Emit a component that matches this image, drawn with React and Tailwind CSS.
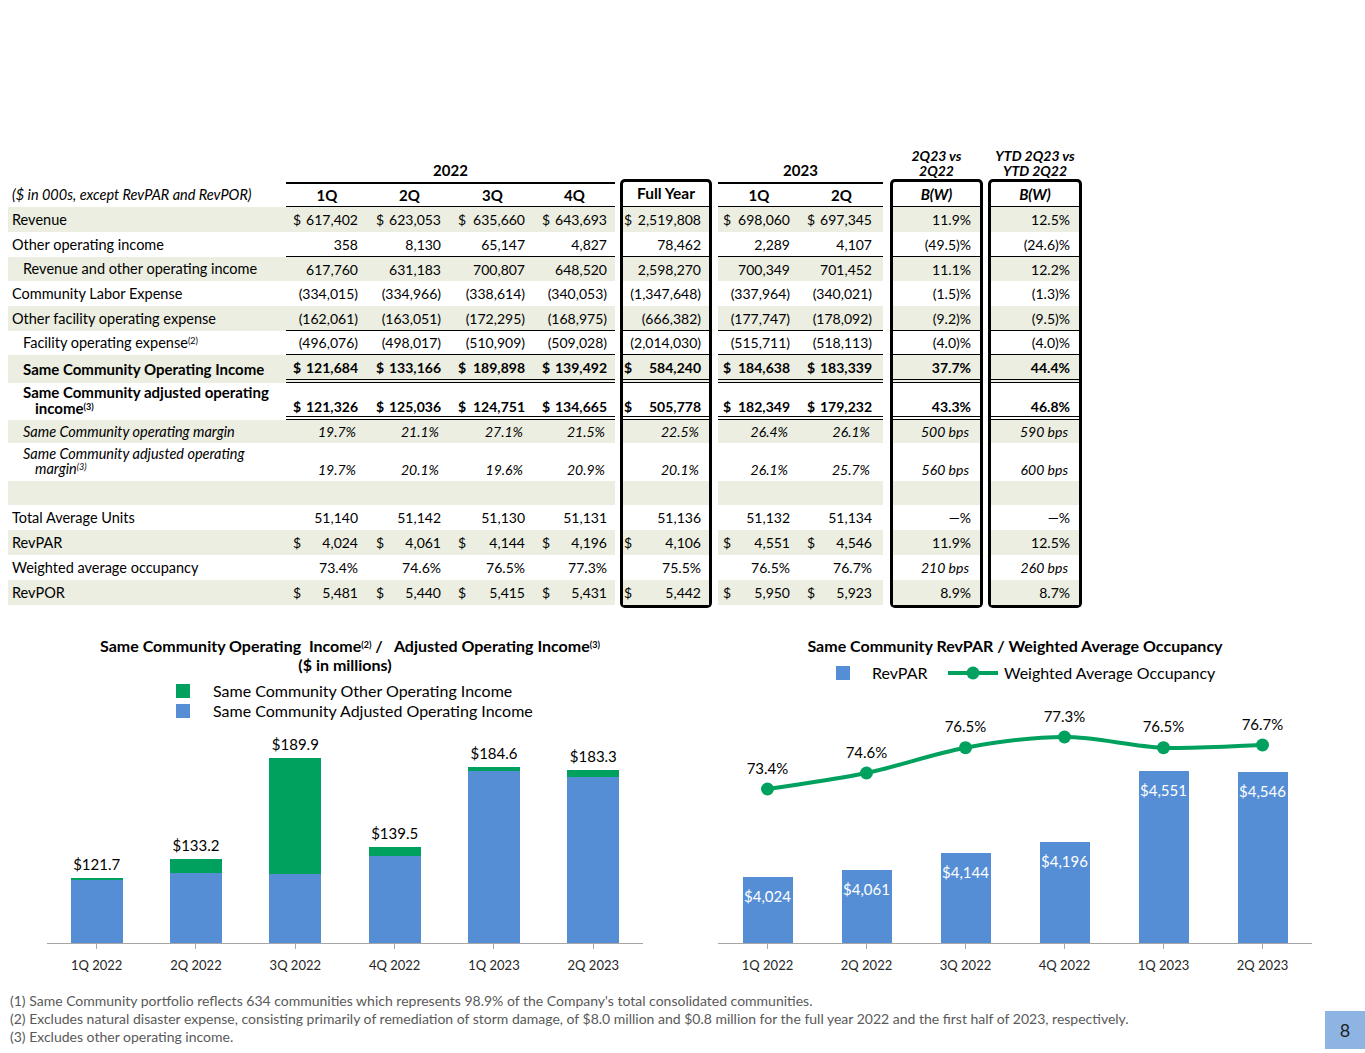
import React from 'react';

const SHADE = 'bg-[#EBEEE0]';

// column geometry for the numeric sections
const QCOLS = [
  { w: 'w-[82px]', pl: 'pl-[7px]', pr: 'pr-[10px]' },
  { w: 'w-[83px]', pl: 'pl-[8px]', pr: 'pr-[10px]' },
  { w: 'w-[83px]', pl: 'pl-[7px]', pr: 'pr-[9px]' },
  { w: 'w-[81px]', pl: 'pl-[8px]', pr: 'pr-[8px]' },
];
const FYCOL = { w: 'w-[86px]', pl: 'pl-[1px]', pr: 'pr-[8px]' };
const YCOLS = [
  { w: 'w-[82px]', pl: 'pl-[5px]', pr: 'pr-[10px]' },
  { w: 'w-[83px]', pl: 'pl-[7px]', pr: 'pr-[11px]' },
];
const B1COL = { w: 'w-[87px]', pl: 'pl-[2px]', pr: 'pr-[9px]', noDollar: true };
const B2COL = { w: 'w-[88px]', pl: 'pl-[2px]', pr: 'pr-[9px]', noDollar: true };

const rows = [
  { label: 'Revenue', h: 'h-[25px]', shade: true, d: true, q: ['617,402', '623,053', '635,660', '643,693'], fy: '2,519,808', y: ['698,060', '697,345'], b: ['11.9%', '12.5%'] },
  { label: 'Other operating income', h: 'h-[25px]', line: 'single', q: ['358', '8,130', '65,147', '4,827'], fy: '78,462', y: ['2,289', '4,107'], b: ['(49.5)%', '(24.6)%'] },
  { label: 'Revenue and other operating income', indent: true, h: 'h-[24px]', shade: true, q: ['617,760', '631,183', '700,807', '648,520'], fy: '2,598,270', y: ['700,349', '701,452'], b: ['11.1%', '12.2%'] },
  { label: 'Community Labor Expense', h: 'h-[25px]', q: ['(334,015)', '(334,966)', '(338,614)', '(340,053)'], fy: '(1,347,648)', y: ['(337,964)', '(340,021)'], b: ['(1.5)%', '(1.3)%'] },
  { label: 'Other facility operating expense', h: 'h-[25px]', shade: true, line: 'single', q: ['(162,061)', '(163,051)', '(172,295)', '(168,975)'], fy: '(666,382)', y: ['(177,747)', '(178,092)'], b: ['(9.2)%', '(9.5)%'] },
  { label: 'Facility operating expense', sup: '(2)', indent: true, h: 'h-[24px]', line: 'single', q: ['(496,076)', '(498,017)', '(510,909)', '(509,028)'], fy: '(2,014,030)', y: ['(515,711)', '(518,113)'], b: ['(4.0)%', '(4.0)%'] },
  { label: 'Same Community Operating Income', kind: 'bold', indent: true, h: 'h-[28px]', shade: true, d: true, line: 'double', q: ['121,684', '133,166', '189,898', '139,492'], fy: '584,240', y: ['184,638', '183,339'], b: ['37.7%', '44.4%'] },
  { label: 'Same Community adjusted operating', label2: 'income', sup: '(3)', kind: 'bold', indent: true, tall: true, h: 'h-[37px]', labelPb: 'pb-[4px] leading-[16px]', valPb: 'pb-[1px]', d: true, line: 'double', q: ['121,326', '125,036', '124,751', '134,665'], fy: '505,778', y: ['182,349', '179,232'], b: ['43.3%', '46.8%'] },
  { label: 'Same Community operating margin', kind: 'italic', indent: true, h: 'h-[23px]', shade: true, q: ['19.7%', '21.1%', '27.1%', '21.5%'], fy: '22.5%', y: ['26.4%', '26.1%'], b: ['500 bps', '590 bps'] },
  { label: 'Same Community adjusted operating', label2: 'margin', sup: '(3)', kind: 'italic', indent: true, tall: true, h: 'h-[38px]', labelPb: 'pb-[5px] leading-[15px]', valPb: 'pb-[3px]', q: ['19.7%', '20.1%', '19.6%', '20.9%'], fy: '20.1%', y: ['26.1%', '25.7%'], b: ['560 bps', '600 bps'] },
  { empty: true, h: 'h-[24px]', shade: true },
  { label: 'Total Average Units', h: 'h-[25px]', q: ['51,140', '51,142', '51,130', '51,131'], fy: '51,136', y: ['51,132', '51,134'], b: ['—%', '—%'] },
  { label: 'RevPAR', h: 'h-[25px]', shade: true, d: true, q: ['4,024', '4,061', '4,144', '4,196'], fy: '4,106', y: ['4,551', '4,546'], b: ['11.9%', '12.5%'] },
  { label: 'Weighted average occupancy', h: 'h-[25px]', q: ['73.4%', '74.6%', '76.5%', '77.3%'], fy: '75.5%', y: ['76.5%', '76.7%'], b: ['210 bps', '260 bps'] },
  { label: 'RevPOR', h: 'h-[25px]', shade: true, d: true, q: ['5,481', '5,440', '5,415', '5,431'], fy: '5,442', y: ['5,950', '5,923'], b: ['8.9%', '8.7%'] },
];

const LabelCell = ({ r }) => {
  const weight = r.kind === 'bold' ? 'font-bold text-[15px]' : r.kind === 'italic' ? 'italic' : '';
  return (
    <div
      className={`${r.h} flex ${r.tall ? `flex-col justify-end ${r.labelPb}` : 'items-center'} ${r.shade ? SHADE : ''} ${r.indent ? 'pl-[15px]' : 'pl-[4px]'} ${weight}`}
    >
      {r.tall ? (
        <>
          <span>{r.label}</span>
          <span className="pl-[12px]">
            {r.label2}
            <sup className="text-[9px] -top-[4px]">{r.sup}</sup>
          </span>
        </>
      ) : (
        <span>
          {r.label}
          {r.sup && <sup className="text-[9px]">{r.sup}</sup>}
        </span>
      )}
    </div>
  );
};

const NumCell = ({ r, v, col }) => {
  const border =
    r.line === 'single' ? 'border-b border-black' : r.line === 'double' ? 'border-b-4 border-double border-black' : '';
  const align = r.tall ? `items-end leading-[16px] ${r.valPb}` : 'items-center';
  const ital = r.kind === 'italic' || (v && v.includes('bps')) ? 'italic' : '';
  return (
    <div
      className={`${r.h} ${col.w} ${col.pl} ${col.pr} flex ${align} justify-between text-[14px] ${r.shade ? SHADE : ''} ${border} ${r.kind === 'bold' ? 'font-bold text-[14.5px]' : ''} ${ital}`}
    >
      <span>{r.d && !col.noDollar ? '$' : ''}</span>
      <span className={ital ? 'pr-[2px]' : ''}>{v}</span>
    </div>
  );
};

const BoxSection = ({ ml, col, head, pick }) => (
  <div className={`${ml} ${col.w} flex flex-col ring-[3px] ring-black rounded-[2px]`}>
    <div className="h-[25px] border-b border-black flex items-center justify-center font-bold italic text-[15px]">{head}</div>
    {rows.map((r, i) => (
      <NumCell key={i} r={r} v={pick(r)} col={col} />
    ))}
  </div>
);

const FinancialTable = () => (
  <div className="pl-[8px] text-[14.5px] text-black">
    {/* year headers */}
    <div className="h-[37px] flex items-end pb-[4px] font-bold text-[14px] leading-[15px]">
      <div className="w-[278px]" />
      <div className="w-[329px] text-center text-[15px]">2022</div>
      <div className="ml-[8px] w-[86px]" />
      <div className="ml-[9px] w-[165px] text-center text-[15px]">2023</div>
      <div className="ml-[10px] w-[87px] text-center italic">
        2Q23 vs
        <br />
        2Q22
      </div>
      <div className="ml-[11px] w-[88px] text-center italic whitespace-nowrap">
        YTD 2Q23 vs
        <br />
        YTD 2Q22
      </div>
    </div>

    <div className="flex">
      {/* labels */}
      <div className="w-[278px] flex flex-col">
        <div className="h-[25px] flex items-center pl-[4px] italic">($ in 000s, except RevPAR and RevPOR)</div>
        {rows.map((r, i) => (
          <LabelCell key={i} r={r} />
        ))}
      </div>

      {/* 2022 quarters */}
      <div className="flex flex-col">
        <div className="h-[25px] flex border-t-2 border-b border-black font-bold text-[15px]">
          {['1Q', '2Q', '3Q', '4Q'].map((h, i) => (
            <div key={h} className={`${QCOLS[i].w} flex items-center justify-center`}>
              {h}
            </div>
          ))}
        </div>
        {rows.map((r, i) => (
          <div key={i} className="flex">
            {QCOLS.map((c, j) => (
              <NumCell key={j} r={r} v={r.q?.[j]} col={c} />
            ))}
          </div>
        ))}
      </div>

      {/* full year box */}
      <div className="ml-[8px] w-[86px] flex flex-col ring-[3px] ring-black rounded-[2px]">
        <div className="h-[25px] border-b border-black flex items-center justify-center font-bold text-[15.5px]">Full Year</div>
        {rows.map((r, i) => (
          <NumCell key={i} r={r} v={r.fy} col={FYCOL} />
        ))}
      </div>

      {/* 2023 quarters */}
      <div className="ml-[9px] flex flex-col">
        <div className="h-[25px] flex border-t-2 border-b border-black font-bold text-[15px]">
          {['1Q', '2Q'].map((h, i) => (
            <div key={h} className={`${YCOLS[i].w} flex items-center justify-center`}>
              {h}
            </div>
          ))}
        </div>
        {rows.map((r, i) => (
          <div key={i} className="flex">
            {YCOLS.map((c, j) => (
              <NumCell key={j} r={r} v={r.y?.[j]} col={c} />
            ))}
          </div>
        ))}
      </div>

      <BoxSection ml="ml-[10px]" col={B1COL} head="B(W)" pick={(r) => r.b?.[0]} />
      <BoxSection ml="ml-[11px]" col={B2COL} head="B(W)" pick={(r) => r.b?.[1]} />
    </div>
  </div>
);

const BLUE = 'bg-[#558ED5]';
const GREEN = 'bg-[#00A05E]';

const opIncome = [
  { q: '1Q 2022', total: 121.7, adj: 121.326 },
  { q: '2Q 2022', total: 133.2, adj: 125.036 },
  { q: '3Q 2022', total: 189.9, adj: 124.751 },
  { q: '4Q 2022', total: 139.5, adj: 134.665 },
  { q: '1Q 2023', total: 184.6, adj: 182.349 },
  { q: '2Q 2023', total: 183.3, adj: 179.232 },
];
const opPx = (v) => 1.774 * (v - 85.6);

const XAxis = ({ labels, ml, w }) => (
  <div className={`${ml} ${w} flex`}>
    {labels.map((l) => (
      <div key={l} className="flex-1 flex flex-col items-center">
        <span className="w-px h-[5px] bg-[#A6A6A6]" />
        <span className="mt-[8px] text-[13px] leading-[16px] text-[#262626]">{l}</span>
      </div>
    ))}
  </div>
);

const OpIncomeChart = () => (
  <div className="w-[690px] flex flex-col">
    <div className="text-center font-bold text-[16px] leading-[19px]">
      <div className="pl-[10px]">
        Same Community Operating&nbsp; Income<sup className="text-[9px]">(2)</sup> /&nbsp;&nbsp; Adjusted Operating Income
        <sup className="text-[9px]">(3)</sup>
      </div>
      <div>($ in millions)</div>
    </div>
    <div className="mt-[10px] pl-[176px] flex flex-col gap-[6px] text-[16px] leading-[14px]">
      <div className="flex items-center h-[14px]">
        <span className={`w-[14px] h-[14px] ${GREEN}`} />
        <span className="ml-[23px]">Same Community Other Operating Income</span>
      </div>
      <div className="flex items-center h-[14px]">
        <span className={`w-[14px] h-[14px] ${BLUE}`} />
        <span className="ml-[23px]">Same Community Adjusted Operating Income</span>
      </div>
    </div>
    <div className="ml-[47px] w-[596px] h-[226px] flex items-end border-b border-[#A6A6A6]">
      {opIncome.map((d) => {
        const total = opPx(d.total);
        const blue = opPx(d.adj);
        return (
          <div key={d.q} className="flex-1 flex flex-col items-center justify-end">
            <span className="text-[15px] leading-[18px] mb-[5px]">${d.total.toFixed(1)}</span>
            <div className={`w-[52px] ${GREEN}`} style={{ height: Math.max(total - blue, 2) }} />
            <div className={`w-[52px] ${BLUE}`} style={{ height: blue }} />
          </div>
        );
      })}
    </div>
    <XAxis labels={opIncome.map((d) => d.q)} ml="ml-[47px]" w="w-[596px]" />
  </div>
);

const revpar = [
  { q: '1Q 2022', v: 4024, occ: 73.4 },
  { q: '2Q 2022', v: 4061, occ: 74.6 },
  { q: '3Q 2022', v: 4144, occ: 76.5 },
  { q: '4Q 2022', v: 4196, occ: 77.3 },
  { q: '1Q 2023', v: 4551, occ: 76.5 },
  { q: '2Q 2023', v: 4546, occ: 76.7 },
];

const smoothPath = (p) => {
  let d = `M${p[0].x},${p[0].y}`;
  for (let i = 0; i < p.length - 1; i++) {
    const p0 = p[i - 1] || p[i];
    const p1 = p[i];
    const p2 = p[i + 1];
    const p3 = p[i + 2] || p2;
    const c1x = p1.x + (p2.x - p0.x) / 6;
    const c1y = p1.y + (p2.y - p0.y) / 6;
    const c2x = p2.x - (p3.x - p1.x) / 6;
    const c2y = p2.y - (p3.y - p1.y) / 6;
    d += ` C${c1x},${c1y} ${c2x},${c2y} ${p2.x},${p2.y}`;
  }
  return d;
};

const RevparChart = () => {
  const pts = revpar.map((d, i) => ({ x: 49.5 + i * 99, y: 109 - 13.33 * (d.occ - 73.4), occ: d.occ }));
  return (
    <div className="w-[650px] flex flex-col">
      <div className="text-center font-bold text-[16px] leading-[19px]">Same Community RevPAR / Weighted Average Occupancy</div>
      <div className="mt-[11px] pl-[146px] flex items-center h-[14px] text-[16px]">
        <span className={`w-[14px] h-[14px] ${BLUE}`} />
        <span className="ml-[22px] w-[76px]">RevPAR</span>
        <svg width="50" height="14" viewBox="0 0 50 14">
          <line x1="0" y1="7" x2="50" y2="7" stroke="#00A05E" strokeWidth="4" />
          <circle cx="25" cy="7" r="6.5" fill="#00A05E" />
        </svg>
        <span className="ml-[6px]">Weighted Average Occupancy</span>
      </div>
      <div className="relative ml-[28px] w-[594px] h-[264px] flex items-end border-b border-[#A6A6A6]">
        {revpar.map((d) => (
          <div key={d.q} className="flex-1 flex justify-center">
            <div
              className={`w-[50px] ${BLUE} flex justify-center pt-[10px] text-[15px] leading-[18px] text-white`}
              style={{ height: 0.2011 * (d.v - 3696) }}
            >
              ${d.v.toLocaleString('en-US')}
            </div>
          </div>
        ))}
        <svg className="absolute inset-0 overflow-visible" width="594" height="264" viewBox="0 0 594 264">
          <path d={smoothPath(pts)} fill="none" stroke="#00A05E" strokeWidth="4" />
          {pts.map((p, i) => (
            <g key={i}>
              <circle cx={p.x} cy={p.y} r="6.5" fill="#00A05E" />
              <text
                x={p.x}
                y={p.y - 19}
                textAnchor="middle"
                dominantBaseline="middle"
                fontSize="15"
                fontFamily="Lato, sans-serif"
                fill="#000"
              >
                {p.occ.toFixed(1)}%
              </text>
            </g>
          ))}
        </svg>
      </div>
      <XAxis labels={revpar.map((d) => d.q)} ml="ml-[28px]" w="w-[594px]" />
    </div>
  );
};

const App = () => {
  return (
    <div className="w-[1365px] h-[1053px] bg-white overflow-hidden font-['Lato',sans-serif] text-black pt-[145px] flex flex-col">
      <FinancialTable />

      <div className="mt-[31px] flex items-start">
        <OpIncomeChart />
        <RevparChart />
      </div>

      <div className="mt-[19px] h-[57px] flex justify-between">
        <div className="pl-[10px] text-[14px] leading-[18px] text-[#595959]">
          <p>(1) Same Community portfolio reflects 634 communities which represents 98.9% of the Company's total consolidated communities.</p>
          <p>
            (2) Excludes natural disaster expense, consisting primarily of remediation of storm damage, of $8.0 million and $0.8 million for the full year 2022 and the first half of 2023, respectively.
          </p>
          <p>(3) Excludes other operating income.</p>
        </div>
        <div className="self-end w-[40px] h-[38px] bg-[#8EB4E3] flex items-center justify-center text-[18px] text-[#1F1F1F]">8</div>
      </div>
    </div>
  );
};

export default App;
